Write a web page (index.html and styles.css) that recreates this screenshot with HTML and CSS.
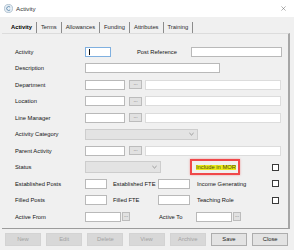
FILE: index.html
```html
<!DOCTYPE html>
<html lang="en">
<head>
  <meta charset="UTF-8" />
  <title>Activity</title>
  <link rel="stylesheet" href="styles.css">
</head>
<body>
  <div class="window">
    <!-- Title bar -->
    <div class="titlebar">
      <svg class="app-icon" viewBox="0 0 10 10">
        <circle cx="5" cy="5" r="4.5" fill="#e6eef5" stroke="#9fb2c4" stroke-width="0.8"/>
        <path d="M6.8 3.5 A2.2 2.2 0 1 0 6.8 6.5" fill="none" stroke="#5f89ad" stroke-width="1"/>
      </svg>
      <span class="title">Activity</span>
      <svg class="close" viewBox="0 0 6 6">
        <path d="M0.5 0.5 L5.5 5.5 M5.5 0.5 L0.5 5.5" stroke="#666" stroke-width="0.6"/>
      </svg>
    </div>

    <!-- Tabs -->
    <div class="tabs">
      <span class="tab active">Activity</span>
      <span class="tab">Terms</span>
      <span class="tab">Allowances</span>
      <span class="tab">Funding</span>
      <span class="tab">Attributes</span>
      <span class="tab">Training</span>
    </div>

    <div class="panel">
      <div class="row">
        <span class="label">Activity</span>
        <span class="input code focused"><span class="caret"></span></span>
        <span class="label-mid post-ref">Post Reference</span>
        <span class="input post-ref-box"></span>
      </div>

      <div class="row">
        <span class="label">Description</span>
        <span class="input desc"></span>
      </div>

      <div class="row">
        <span class="label">Department</span>
        <span class="input lookup"></span>
        <span class="dots">...</span>
        <span class="input lookup-name"></span>
      </div>

      <div class="row">
        <span class="label">Location</span>
        <span class="input lookup"></span>
        <span class="dots">...</span>
        <span class="input lookup-name"></span>
      </div>

      <div class="row">
        <span class="label">Line Manager</span>
        <span class="input lookup"></span>
        <span class="dots">...</span>
        <span class="input lookup-name"></span>
      </div>

      <div class="row">
        <span class="label">Activity Category</span>
        <span class="select category">
          <svg class="chevron" viewBox="0 0 6 4"><path d="M0.5 0.8 L3 3.2 L5.5 0.8" fill="none" stroke="#666" stroke-width="0.7"/></svg>
        </span>
      </div>

      <div class="row">
        <span class="label">Parent Activity</span>
        <span class="input lookup"></span>
        <span class="dots">...</span>
        <span class="input lookup-name"></span>
      </div>

      <div class="row">
        <span class="label">Status</span>
        <span class="select status">
          <svg class="chevron" viewBox="0 0 6 4"><path d="M0.5 0.8 L3 3.2 L5.5 0.8" fill="none" stroke="#666" stroke-width="0.7"/></svg>
        </span>
        <span class="mor"><span class="mor-text">Include in MOR</span></span>
        <span class="check"></span>
      </div>

      <div class="row">
        <span class="label">Established Posts</span>
        <span class="input num"></span>
        <span class="label-mid fte">Established FTE</span>
        <span class="input fte-box"></span>
        <span class="label-mid flag">Income Generating</span>
        <span class="check"></span>
      </div>

      <div class="row">
        <span class="label">Filled Posts</span>
        <span class="input num"></span>
        <span class="label-mid fte">Filled FTE</span>
        <span class="input fte-box"></span>
        <span class="label-mid flag">Teaching Role</span>
        <span class="check"></span>
      </div>

      <div class="row">
        <span class="label">Active From</span>
        <span class="input date"></span>
        <span class="dots small">...</span>
        <span class="label-mid active-to">Active To</span>
        <span class="input date"></span>
        <span class="dots small">...</span>
      </div>
    </div>

    <!-- Bottom buttons -->
    <div class="buttons">
      <span class="btn disabled">New</span>
      <span class="btn disabled">Edit</span>
      <span class="btn disabled">Delete</span>
      <span class="btn disabled">View</span>
      <span class="btn disabled">Archive</span>
      <span class="btn">Save</span>
      <span class="btn">Close</span>
    </div>
  </div>
</body>
</html>
```

FILE: styles.css
```css
* {
  box-sizing: border-box;
}

body {
  margin: 0;
  font-family: "Liberation Sans", Arial, sans-serif;
  font-size: 5.8px;
  color: #141414;
  background: #f0f0f0;
}

.window {
  width: 294px;
  height: 250px;
  background: #f0f0f0;
  display: flex;
  flex-direction: column;
  overflow: hidden;
}

/* title bar */
.titlebar {
  height: 17px;
  background: #fff;
  display: flex;
  align-items: center;
  padding: 0 8px 0 4px;
  flex: none;
}

.app-icon {
  width: 9px;
  height: 9px;
  margin-right: 3px;
}

.title {
  flex: 1;
  font-size: 6.2px;
  color: #333;
}

.close {
  width: 5px;
  height: 5px;
}

/* tabs */
.tabs {
  display: flex;
  margin: 5px 0 0 7px;
  height: 11px;
  flex: none;
}

.tab {
  padding: 0 4px;
  line-height: 11px;
  border-right: 1px solid #8c8c8c;
  color: #2a2a2a;
}

.tab.active {
  font-weight: bold;
  color: #000;
}

/* main panel */
.panel {
  flex: none;
  height: 196px;
  margin: 0 4px 0 2px;
  padding: 9.5px 0 0 13px;
  border-top: 1px solid #dcdcdc;
  border-right: 2px solid #a6a6a6;
  border-bottom: 1px solid #9c9c9c;
}

.row {
  display: flex;
  align-items: center;
  height: 16.5px;
}

.label {
  width: 70px;
  flex: none;
}

.label-mid {
  flex: none;
}

.input {
  flex: none;
  height: 10px;
  background: #fff;
  border: 1px solid #b9b9b9;
}

.input.focused {
  border-color: #7fb0e0;
  padding: 1px 0 0 3px;
}

.caret {
  display: block;
  width: 1px;
  height: 6px;
  background: #111;
}

.code { width: 26px; }
.post-ref { width: 54px; margin-left: 26px; }
.post-ref-box { width: 91px; }
.desc { width: 135px; }
.lookup { width: 40px; }
.lookup-name { width: 136px; margin-left: 3px; border-color: #dcdcdc; }

.dots {
  flex: none;
  width: 13px;
  height: 9px;
  margin-left: 4px;
  background: #e1e1e1;
  border: 1px solid #bcbcbc;
  color: #555;
  font-size: 5px;
  line-height: 5px;
  text-align: center;
}

.dots.small {
  width: 8px;
  margin-left: 1px;
}

.select {
  flex: none;
  height: 11px;
  background: #e3e3e3;
  border: 1px solid #cdcdcd;
  display: flex;
  align-items: center;
  justify-content: flex-end;
  padding-right: 3px;
}

.chevron {
  width: 5px;
  height: 4px;
}

.category { width: 113px; }
.status { width: 76px; height: 12px; }

.mor {
  flex: none;
  width: 50px;
  height: 16px;
  margin-left: 29px;
  border: 2px solid #f0484a;
  box-shadow: 0 0 2px rgba(240, 72, 74, 0.5);
  display: flex;
  align-items: center;
  padding-left: 4px;
}

.mor-text {
  background: #eaea1a;
  color: #4a4a10;
  line-height: 5px;
}

.check {
  flex: none;
  width: 7px;
  height: 7px;
  margin-left: auto;
  margin-right: 9px;
  background: #fff;
  border: 1px solid #3a3a3a;
}

.num { width: 22px; }
.fte { width: 45px; margin-left: 6px; }
.fte-box { width: 32px; }
.flag { margin-left: 7px; }

.date { width: 36px; }
.active-to { width: 37px; margin-left: 29px; }

/* bottom buttons */
.buttons {
  display: flex;
  gap: 5.2px;
  margin: 4px 0 0 5px;
  flex: none;
}

.btn {
  width: 36px;
  height: 13px;
  line-height: 11px;
  text-align: center;
  background: #e3e3e3;
  border: 1px solid #adadad;
  color: #1a1a1a;
}

.btn.disabled {
  background: #d8d8d8;
  border-color: #d3d3d3;
  color: #a3a3a3;
}
```
